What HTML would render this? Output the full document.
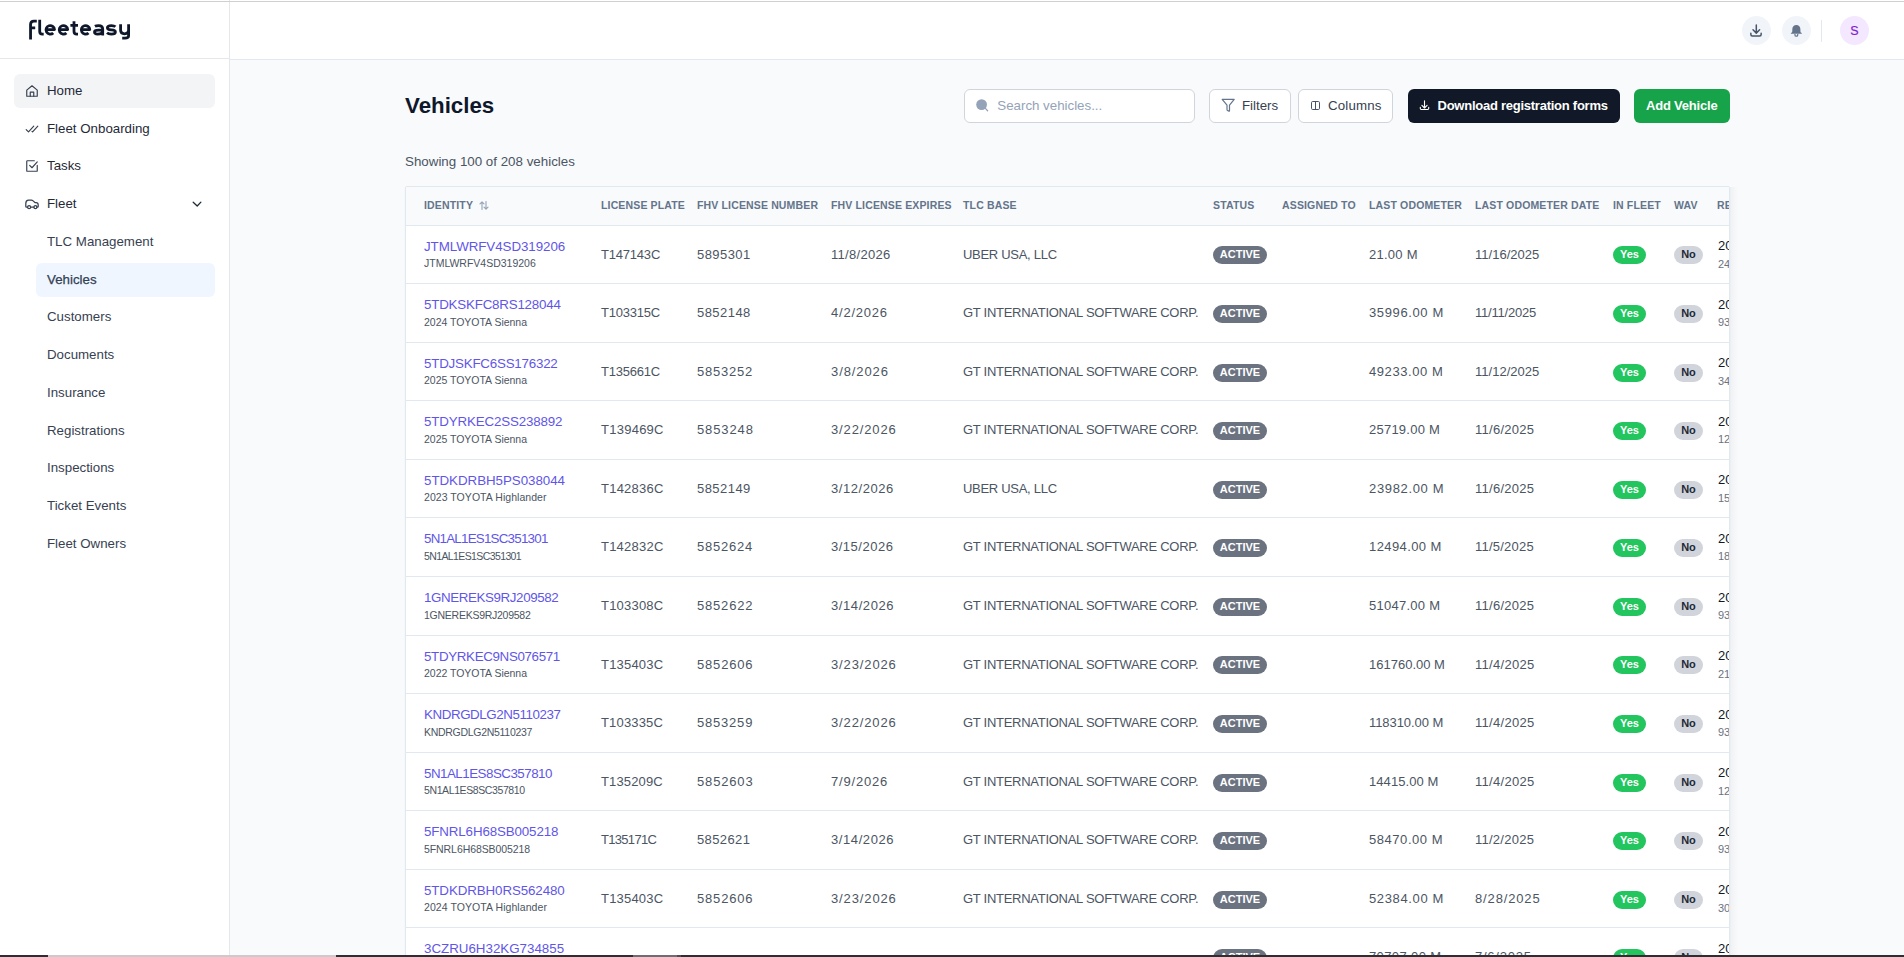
<!DOCTYPE html>
<html><head><meta charset="utf-8">
<style>
*{box-sizing:border-box;margin:0;padding:0}
html,body{width:1904px;height:957px;overflow:hidden}
body{position:relative;background:#f8fafc;font-family:"Liberation Sans",sans-serif;color:#111827}
.abs{position:absolute}
#topline{position:absolute;left:0;top:1px;width:1904px;height:1px;background:#cfd1d1;z-index:10}
#side{position:absolute;left:0;top:0;width:230px;height:957px;background:#fff;border-right:1px solid #e5e7eb}
#logo{position:absolute;left:28px;top:14px;font-size:23px;font-weight:700;color:#0f172a;letter-spacing:0.2px}
#sidehead{position:absolute;left:0;top:58px;width:229px;height:1px;background:#e5e7eb}
.nav{position:absolute;left:14px;width:201px;height:34px;border-radius:6px;font-size:13.3px;font-weight:500;color:#1f2937}
.nav .t{position:absolute;left:33px;top:9px;white-space:nowrap}
.nav svg{position:absolute;left:11px;top:10px}
.nav.hl{background:#f3f4f6}
.sub{position:absolute}
.sn{position:absolute;left:36px;width:179px;height:34px;border-radius:6px;font-size:13.3px;color:#374151}
.sn .t{position:absolute;left:11px;top:9px;white-space:nowrap}
.sn.hl{background:#eff6ff;color:#334155;height:34px;-webkit-text-stroke:0.25px #334155}
.sn.hl .t{top:9px}
#header{position:absolute;left:230px;top:0;width:1674px;height:60px;background:#fff;border-bottom:1px solid #e2e8f0}
.hbtn{position:absolute;top:16px;width:29px;height:29px;border-radius:50%;background:#f1f5f9}
#title{position:absolute;left:405px;top:92.5px;font-size:22.3px;font-weight:700;color:#0f172a;white-space:nowrap}
#showing{position:absolute;left:405px;top:154px;font-size:13.35px;color:#4b5563;white-space:nowrap}
#search{position:absolute;left:964px;top:89px;width:231px;height:34px;background:#fff;border:1px solid #d1d5db;border-radius:6px}
#search .ph{position:absolute;left:32.3px;top:8px;font-size:13.3px;color:#94a3b8;white-space:nowrap}
.obtn{position:absolute;top:89px;height:34px;background:#fff;border:1px solid #d1d5db;border-radius:6px;font-size:13.3px;font-weight:500;color:#374151}
.obtn .t{position:absolute;top:8px;white-space:nowrap}
#dl{position:absolute;left:1408px;top:89px;width:212px;height:34px;background:#111827;border-radius:6px;color:#fff;font-size:13px;font-weight:700;letter-spacing:-0.3px}
#add{position:absolute;left:1634px;top:89px;width:96px;height:34px;background:#16a34a;border-radius:6px;color:#fff;font-size:13px;font-weight:700;letter-spacing:-0.2px}
#table{position:absolute;left:405px;top:186px;width:1325px;height:800px;background:#fff;border:1px solid #e2e8f0;border-radius:2px;overflow:hidden;box-shadow:0 1px 2px rgba(0,0,0,0.05)}
#thead{position:absolute;left:0;top:0;width:100%;height:39px;background:#f8fafc;border-bottom:1px solid #e2e8f0}
.th{position:absolute;top:12px;font-size:10.5px;font-weight:700;color:#64748b;white-space:nowrap;letter-spacing:0.15px}
.sort{font-size:10px;color:#94a3b8}
.row{position:absolute;left:0;width:100%;height:58.5px;border-bottom:1px solid #e2e8f0}
.vin{position:absolute;top:13px;font-size:13.35px;color:#5f56e8;white-space:nowrap}
.sub{position:absolute;top:31px;font-size:10.5px;color:#4b5563;white-space:nowrap}
.td{position:absolute;top:21px;font-size:13px;color:#4b5563;white-space:nowrap}
.badge{position:absolute;top:20px;height:18px;border-radius:9px;font-size:11px;font-weight:700;text-align:center;line-height:17px;white-space:nowrap}
.active{width:54px;background:#6b7280;color:#fff}
.yes{width:33px;background:#22c55e;color:#fff}
.no{width:29px;background:#d1d5db;color:#1f2937;line-height:16px!important}
.reg1{position:absolute;top:12px;font-size:13px;color:#111827;white-space:nowrap}
.reg2{position:absolute;top:31.5px;font-size:11px;color:#6b7280;white-space:nowrap}
#botbar{position:absolute;left:0;top:955px;width:1904px;height:2px;background:#2b2f31;z-index:20}
</style></head><body>
<div id="topline"></div>
<div id="side">
  <svg class="abs" style="left:0;top:0" width="140" height="50" viewBox="0 0 140 50" fill="none" stroke="#0f172a" stroke-width="2.8" stroke-linecap="butt" stroke-linejoin="round">
<path d="M30.55 39.6V24.6Q30.55 21.2 33.9 21.2H36.8M30.55 27.8H35.2"/>
<path d="M39.7 19.8V31.2Q39.7 34.1 42.4 34.1H43.7"/>
<path d="M46 29.6H54.5A4.25 4.25 0 1 0 53.2 32.9"/>
<path d="M59.2 29.6H67.7A4.25 4.25 0 1 0 66.4 32.9"/>
<path d="M74 21.3V31.2Q74 34.1 76.8 34.1H78M70.4 25.45H78"/>
<path d="M81.3 29.6H89.8A4.25 4.25 0 1 0 88.5 32.9"/>
<path d="M94.9 26.3Q96.2 25.6 98.6 25.6Q102.7 25.6 102.7 29.3V35.5M102.7 30.2H98.3Q94.5 30.2 94.5 32.1Q94.5 34.1 97.6 34.1Q102.7 34.1 102.7 30.8"/>
<path d="M115.4 26.8Q114.2 25.6 111.4 25.6Q107.4 25.6 107.4 27.8Q107.4 29.6 111.3 29.9Q115.4 30.2 115.4 32Q115.4 34.1 111.3 34.1Q108.4 34.1 107 32.7"/>
<path d="M120.6 24.2V30.3Q120.6 33.8 124.6 33.8Q128.6 33.8 128.6 30.3M128.6 24.2V35.8Q128.6 38.2 125 38.2H122.2"/>
</svg>
  <div id="sidehead"></div>
  <div class="nav hl" style="top:74px">
    <svg width="14" height="14" viewBox="0 0 24 24" fill="none" stroke="#374151" stroke-width="2" stroke-linecap="round" stroke-linejoin="round"><path d="M3 10.5L12 3l9 7.5V21H3z"/><path d="M9 21v-7h6v7"/></svg>
    <span class="t">Home</span></div>
  <div class="nav" style="top:112px">
    <svg width="14" height="14" viewBox="0 0 24 24" fill="none" stroke="#374151" stroke-width="2" stroke-linecap="round" stroke-linejoin="round"><path d="M2 13l4 4L15 7"/><path d="M12 16l1 1 9-10"/></svg>
    <span class="t">Fleet Onboarding</span></div>
  <div class="nav" style="top:149px">
    <svg width="14" height="14" viewBox="0 0 24 24" fill="none" stroke="#374151" stroke-width="2" stroke-linecap="round" stroke-linejoin="round"><path d="M21 11v9a1 1 0 0 1-1 1H4a1 1 0 0 1-1-1V4a1 1 0 0 1 1-1h12"/><path d="M8 11l4 4 9-10"/></svg>
    <span class="t">Tasks</span></div>
  <div class="nav" style="top:187px">
    <svg width="14" height="14" viewBox="0 0 14 14" fill="none" stroke="#374151" stroke-width="1.25" stroke-linecap="round" stroke-linejoin="round"><path d="M2.6 10.2H1.6Q0.8 10.2 0.8 9.4V6.4Q0.8 3.2 3.6 3.2H6.4Q7.3 3.2 8.1 3.9L9.9 5.5H11.2Q13.2 5.5 13.2 7.9V9.4Q13.2 10.2 12.4 10.2H11.9M5.6 10.2H8.9"/><circle cx="4.1" cy="10.2" r="1.5"/><circle cx="10.4" cy="10.2" r="1.5"/></svg>
    <span class="t">Fleet</span>
    <svg style="left:177px;top:12px" width="12" height="12" viewBox="0 0 12 12" fill="none" stroke="#1f2937" stroke-width="1.3" stroke-linecap="round" stroke-linejoin="round"><path d="M2.2 3.3L6.2 7L9.9 3.1"/></svg>
  </div>
  <div class="sn" style="top:225px"><span class="t">TLC Management</span></div>
  <div class="sn hl" style="top:263px"><span class="t">Vehicles</span></div>
  <div class="sn" style="top:300px"><span class="t">Customers</span></div>
  <div class="sn" style="top:338px"><span class="t">Documents</span></div>
  <div class="sn" style="top:376px"><span class="t">Insurance</span></div>
  <div class="sn" style="top:414px"><span class="t">Registrations</span></div>
  <div class="sn" style="top:451px"><span class="t">Inspections</span></div>
  <div class="sn" style="top:489px"><span class="t">Ticket Events</span></div>
  <div class="sn" style="top:527px"><span class="t">Fleet Owners</span></div>
</div>
<div id="header">
  <div class="hbtn" style="left:1512px"><svg class="abs" style="left:0;top:0" width="29" height="29" viewBox="0 0 29 29" fill="none" stroke="#475569" stroke-width="1.5" stroke-linecap="round" stroke-linejoin="round"><path d="M14.3 9.1V17.1M11 13.8L14.3 17.1L17.6 13.8M8.85 17.3V18.6Q8.85 20.05 10.3 20.05H17.7Q19.15 20.05 19.15 18.6V17.3"/></svg></div>
  <div class="hbtn" style="left:1552px"><svg class="abs" style="left:0;top:0" width="29" height="29" viewBox="0 0 29 29"><path d="M14.35 9.1C11.9 9.1 10.3 10.9 10.3 13.3V15.2Q10.3 16.5 8.9 17.1V17.8H19.8V17.1Q18.4 16.5 18.4 15.2V13.3C18.4 10.9 16.8 9.1 14.35 9.1Z" fill="#64748b"/><path d="M12.95 18V18.9Q12.95 20.2 14.35 20.2Q15.75 20.2 15.75 18.9V18" fill="none" stroke="#64748b" stroke-width="1.2"/></svg></div>
  <div class="abs" style="left:1591px;top:20px;width:1px;height:22px;background:#e2e8f0"></div>
  <div class="hbtn" style="left:1610px;background:#f3e8ff"><span class="abs" style="left:10.3px;top:8px;font-size:12.5px;color:#7e22ce;-webkit-text-stroke:0.2px #7e22ce">S</span></div>
</div>
<div id="title">Vehicles</div>
<div id="showing">Showing 100 of 208 vehicles</div>
<div id="search"><svg class="abs" style="left:11px;top:9px" width="14" height="14" viewBox="0 0 14 14"><circle cx="5.6" cy="5.6" r="5.4" fill="#94a3b8"/><path d="M9.4 9.4L11.6 11.8" stroke="#94a3b8" stroke-width="1.3" stroke-linecap="round"/></svg><span class="ph">Search vehicles...</span></div>
<div class="obtn" style="left:1209px;width:82px"><svg class="abs" style="left:11px;top:8px" width="15" height="15" viewBox="0 0 15 15" fill="none" stroke="#64748b" stroke-width="1.2" stroke-linejoin="round"><path d="M1.2 1.4H13.2L8.5 7.2V12.6Q8.5 13.5 7.7 13.1L6.8 12.6Q6 12.2 6 11.4V7.2Z"/></svg><span class="t" style="left:32px">Filters</span></div>
<div class="obtn" style="left:1298px;width:95px"><svg class="abs" style="left:12px;top:11px" width="11" height="11" viewBox="0 0 11 11" fill="none" stroke="#475569" stroke-width="1"><rect x="0.5" y="0.5" width="8" height="8" rx="1.2"/><path d="M4.5 0.5V8.5"/></svg><span class="t" style="left:29px;letter-spacing:0.15px">Columns</span></div>
<div id="dl"><svg class="abs" style="left:11px;top:11px" width="12" height="12" viewBox="0 0 12 12" fill="none" stroke="#fff" stroke-width="1.1" stroke-linecap="round" stroke-linejoin="round"><path d="M5.5 0.9V7.9M2.9 5.4L5.5 8L8.1 5.4M1.3 7.2V8.6Q1.3 9.5 2.2 9.5H8.8Q9.7 9.5 9.7 8.6V7.2"/></svg><span class="abs" style="left:29.5px;top:9px;white-space:nowrap;letter-spacing:-0.25px">Download registration forms</span></div>
<div id="add"><span class="abs" style="left:12px;top:9px;white-space:nowrap">Add Vehicle</span></div>
<div id="table">
  <div id="thead"><div class="th" style="left:18px">IDENTITY</div><div class="th" style="left:195px">LICENSE PLATE</div><div class="th" style="left:291px">FHV LICENSE NUMBER</div><div class="th" style="left:425px">FHV LICENSE EXPIRES</div><div class="th" style="left:557px">TLC BASE</div><div class="th" style="left:807px">STATUS</div><div class="th" style="left:876px">ASSIGNED TO</div><div class="th" style="left:963px">LAST ODOMETER</div><div class="th" style="left:1069px">LAST ODOMETER DATE</div><div class="th" style="left:1207px">IN FLEET</div><div class="th" style="left:1268px">WAV</div><div class="th" style="left:1311px">REGISTRATION</div><svg class="abs" style="left:73px;top:14px" width="10" height="9" viewBox="0 0 10 9" fill="none" stroke="#94a3b8" stroke-width="1.1" stroke-linecap="round" stroke-linejoin="round"><path d="M3 8.5V0.8M1 2.8L3 0.8L5 2.8M7 0.5V8.2M5 6.2L7 8.2L9 6.2"/></svg></div>
  <div class="row" style="top:39px;height:58px"><div class="vin" style="left:18px;letter-spacing:-0.059px">JTMLWRFV4SD319206</div><div class="sub" style="left:18px;top:31px;letter-spacing:-0.004px">JTMLWRFV4SD319206</div><div class="td" style="left:195px;letter-spacing:-0.204px">T147143C</div><div class="td" style="left:291px;letter-spacing:0.43px">5895301</div><div class="td" style="left:425px;letter-spacing:0.295px">11/8/2026</div><div class="td" style="left:557px;letter-spacing:-0.292px">UBER USA, LLC</div><div class="td" style="left:963px;letter-spacing:0.258px">21.00 M</div><div class="td" style="left:1069px;letter-spacing:0.023px">11/16/2025</div><div class="badge active" style="left:807px;top:20px">ACTIVE</div><div class="badge yes" style="left:1207px;top:20px">Yes</div><div class="badge no" style="left:1268px;top:20px">No</div><div class="reg1" style="left:1312px;top:12px">2025</div><div class="reg2" style="left:1312px">2400</div></div>
<div class="row" style="top:97px;height:59px"><div class="vin" style="left:18px;letter-spacing:-0.205px">5TDKSKFC8RS128044</div><div class="sub" style="left:18px;top:32px;letter-spacing:-0.019px">2024 TOYOTA Sienna</div><div class="td" style="left:195px;letter-spacing:-0.213px">T103315C</div><div class="td" style="left:291px;letter-spacing:0.453px">5852148</div><div class="td" style="left:425px;letter-spacing:0.774px">4/2/2026</div><div class="td" style="left:557px;letter-spacing:-0.277px">GT INTERNATIONAL SOFTWARE CORP.</div><div class="td" style="left:963px;letter-spacing:0.623px">35996.00 M</div><div class="td" style="left:1069px;letter-spacing:-0.206px">11/11/2025</div><div class="badge active" style="left:807px;top:21px">ACTIVE</div><div class="badge yes" style="left:1207px;top:21px">Yes</div><div class="badge no" style="left:1268px;top:21px">No</div><div class="reg1" style="left:1312px;top:13px">2025</div><div class="reg2" style="left:1312px">9300</div></div>
<div class="row" style="top:156px;height:58px"><div class="vin" style="left:18px;letter-spacing:-0.214px">5TDJSKFC6SS176322</div><div class="sub" style="left:18px;top:31px;letter-spacing:-0.019px">2025 TOYOTA Sienna</div><div class="td" style="left:195px;letter-spacing:-0.224px">T135661C</div><div class="td" style="left:291px;letter-spacing:0.771px">5853252</div><div class="td" style="left:425px;letter-spacing:0.912px">3/8/2026</div><div class="td" style="left:557px;letter-spacing:-0.277px">GT INTERNATIONAL SOFTWARE CORP.</div><div class="td" style="left:963px;letter-spacing:0.572px">49233.00 M</div><div class="td" style="left:1069px;letter-spacing:0.017px">11/12/2025</div><div class="badge active" style="left:807px;top:21px">ACTIVE</div><div class="badge yes" style="left:1207px;top:21px">Yes</div><div class="badge no" style="left:1268px;top:21px">No</div><div class="reg1" style="left:1312px;top:12px">2025</div><div class="reg2" style="left:1312px">3400</div></div>
<div class="row" style="top:214px;height:59px"><div class="vin" style="left:18px;letter-spacing:-0.152px">5TDYRKEC2SS238892</div><div class="sub" style="left:18px;top:32px;letter-spacing:-0.019px">2025 TOYOTA Sienna</div><div class="td" style="left:195px;letter-spacing:0.253px">T139469C</div><div class="td" style="left:291px;letter-spacing:0.893px">5853248</div><div class="td" style="left:425px;letter-spacing:0.86px">3/22/2026</div><div class="td" style="left:557px;letter-spacing:-0.277px">GT INTERNATIONAL SOFTWARE CORP.</div><div class="td" style="left:963px;letter-spacing:0.235px">25719.00 M</div><div class="td" style="left:1069px;letter-spacing:0.261px">11/6/2025</div><div class="badge active" style="left:807px;top:21px">ACTIVE</div><div class="badge yes" style="left:1207px;top:21px">Yes</div><div class="badge no" style="left:1268px;top:21px">No</div><div class="reg1" style="left:1312px;top:13px">2025</div><div class="reg2" style="left:1312px">1200</div></div>
<div class="row" style="top:273px;height:58px"><div class="vin" style="left:18px;letter-spacing:-0.042px">5TDKDRBH5PS038044</div><div class="sub" style="left:18px;top:31px;letter-spacing:0.052px">2023 TOYOTA Highlander</div><div class="td" style="left:195px;letter-spacing:0.233px">T142836C</div><div class="td" style="left:291px;letter-spacing:0.452px">5852149</div><div class="td" style="left:425px;letter-spacing:0.545px">3/12/2026</div><div class="td" style="left:557px;letter-spacing:-0.292px">UBER USA, LLC</div><div class="td" style="left:963px;letter-spacing:0.65px">23982.00 M</div><div class="td" style="left:1069px;letter-spacing:0.261px">11/6/2025</div><div class="badge active" style="left:807px;top:21px">ACTIVE</div><div class="badge yes" style="left:1207px;top:21px">Yes</div><div class="badge no" style="left:1268px;top:21px">No</div><div class="reg1" style="left:1312px;top:12px">2025</div><div class="reg2" style="left:1312px">1500</div></div>
<div class="row" style="top:331px;height:59px"><div class="vin" style="left:18px;letter-spacing:-0.763px">5N1AL1ES1SC351301</div><div class="sub" style="left:18px;top:32px;letter-spacing:-0.608px">5N1AL1ES1SC351301</div><div class="td" style="left:195px;letter-spacing:0.227px">T142832C</div><div class="td" style="left:291px;letter-spacing:0.772px">5852624</div><div class="td" style="left:425px;letter-spacing:0.51px">3/15/2026</div><div class="td" style="left:557px;letter-spacing:-0.277px">GT INTERNATIONAL SOFTWARE CORP.</div><div class="td" style="left:963px;letter-spacing:0.409px">12494.00 M</div><div class="td" style="left:1069px;letter-spacing:0.218px">11/5/2025</div><div class="badge active" style="left:807px;top:21px">ACTIVE</div><div class="badge yes" style="left:1207px;top:21px">Yes</div><div class="badge no" style="left:1268px;top:21px">No</div><div class="reg1" style="left:1312px;top:13px">2025</div><div class="reg2" style="left:1312px">1800</div></div>
<div class="row" style="top:390px;height:59px"><div class="vin" style="left:18px;letter-spacing:-0.39px">1GNEREKS9RJ209582</div><div class="sub" style="left:18px;top:32px;letter-spacing:-0.257px">1GNEREKS9RJ209582</div><div class="td" style="left:195px;letter-spacing:0.213px">T103308C</div><div class="td" style="left:291px;letter-spacing:0.805px">5852622</div><div class="td" style="left:425px;letter-spacing:0.584px">3/14/2026</div><div class="td" style="left:557px;letter-spacing:-0.277px">GT INTERNATIONAL SOFTWARE CORP.</div><div class="td" style="left:963px;letter-spacing:0.257px">51047.00 M</div><div class="td" style="left:1069px;letter-spacing:0.261px">11/6/2025</div><div class="badge active" style="left:807px;top:21px">ACTIVE</div><div class="badge yes" style="left:1207px;top:21px">Yes</div><div class="badge no" style="left:1268px;top:21px">No</div><div class="reg1" style="left:1312px;top:13px">2025</div><div class="reg2" style="left:1312px">9300</div></div>
<div class="row" style="top:449px;height:58px"><div class="vin" style="left:18px;letter-spacing:-0.336px">5TDYRKEC9NS076571</div><div class="sub" style="left:18px;top:31px;letter-spacing:-0.019px">2022 TOYOTA Sienna</div><div class="td" style="left:195px;letter-spacing:0.189px">T135403C</div><div class="td" style="left:291px;letter-spacing:0.818px">5852606</div><div class="td" style="left:425px;letter-spacing:0.875px">3/23/2026</div><div class="td" style="left:557px;letter-spacing:-0.277px">GT INTERNATIONAL SOFTWARE CORP.</div><div class="td" style="left:963px;letter-spacing:0.0px">161760.00 M</div><div class="td" style="left:1069px;letter-spacing:0.292px">11/4/2025</div><div class="badge active" style="left:807px;top:20px">ACTIVE</div><div class="badge yes" style="left:1207px;top:20px">Yes</div><div class="badge no" style="left:1268px;top:20px">No</div><div class="reg1" style="left:1312px;top:12px">2025</div><div class="reg2" style="left:1312px">2100</div></div>
<div class="row" style="top:507px;height:59px"><div class="vin" style="left:18px;letter-spacing:-0.421px">KNDRGDLG2N5110237</div><div class="sub" style="left:18px;top:32px;letter-spacing:-0.289px">KNDRGDLG2N5110237</div><div class="td" style="left:195px;letter-spacing:0.165px">T103335C</div><div class="td" style="left:291px;letter-spacing:0.794px">5853259</div><div class="td" style="left:425px;letter-spacing:0.86px">3/22/2026</div><div class="td" style="left:557px;letter-spacing:-0.277px">GT INTERNATIONAL SOFTWARE CORP.</div><div class="td" style="left:963px;letter-spacing:-0.066px">118310.00 M</div><div class="td" style="left:1069px;letter-spacing:0.292px">11/4/2025</div><div class="badge active" style="left:807px;top:21px">ACTIVE</div><div class="badge yes" style="left:1207px;top:21px">Yes</div><div class="badge no" style="left:1268px;top:21px">No</div><div class="reg1" style="left:1312px;top:13px">2025</div><div class="reg2" style="left:1312px">9300</div></div>
<div class="row" style="top:566px;height:58px"><div class="vin" style="left:18px;letter-spacing:-0.507px">5N1AL1ES8SC357810</div><div class="sub" style="left:18px;top:31px;letter-spacing:-0.395px">5N1AL1ES8SC357810</div><div class="td" style="left:195px;letter-spacing:0.147px">T135209C</div><div class="td" style="left:291px;letter-spacing:0.833px">5852603</div><div class="td" style="left:425px;letter-spacing:0.798px">7/9/2026</div><div class="td" style="left:557px;letter-spacing:-0.277px">GT INTERNATIONAL SOFTWARE CORP.</div><div class="td" style="left:963px;letter-spacing:0.082px">14415.00 M</div><div class="td" style="left:1069px;letter-spacing:0.292px">11/4/2025</div><div class="badge active" style="left:807px;top:21px">ACTIVE</div><div class="badge yes" style="left:1207px;top:21px">Yes</div><div class="badge no" style="left:1268px;top:21px">No</div><div class="reg1" style="left:1312px;top:12px">2025</div><div class="reg2" style="left:1312px">1200</div></div>
<div class="row" style="top:624px;height:59px"><div class="vin" style="left:18px;letter-spacing:-0.131px">5FNRL6H68SB005218</div><div class="sub" style="left:18px;top:32px;letter-spacing:-0.075px">5FNRL6H68SB005218</div><div class="td" style="left:195px;letter-spacing:-0.691px">T135171C</div><div class="td" style="left:291px;letter-spacing:0.386px">5852621</div><div class="td" style="left:425px;letter-spacing:0.584px">3/14/2026</div><div class="td" style="left:557px;letter-spacing:-0.277px">GT INTERNATIONAL SOFTWARE CORP.</div><div class="td" style="left:963px;letter-spacing:0.551px">58470.00 M</div><div class="td" style="left:1069px;letter-spacing:0.255px">11/2/2025</div><div class="badge active" style="left:807px;top:21px">ACTIVE</div><div class="badge yes" style="left:1207px;top:21px">Yes</div><div class="badge no" style="left:1268px;top:21px">No</div><div class="reg1" style="left:1312px;top:13px">2025</div><div class="reg2" style="left:1312px">9300</div></div>
<div class="row" style="top:683px;height:58px"><div class="vin" style="left:18px;letter-spacing:-0.107px">5TDKDRBH0RS562480</div><div class="sub" style="left:18px;top:31px;letter-spacing:0.071px">2024 TOYOTA Highlander</div><div class="td" style="left:195px;letter-spacing:0.189px">T135403C</div><div class="td" style="left:291px;letter-spacing:0.818px">5852606</div><div class="td" style="left:425px;letter-spacing:0.875px">3/23/2026</div><div class="td" style="left:557px;letter-spacing:-0.277px">GT INTERNATIONAL SOFTWARE CORP.</div><div class="td" style="left:963px;letter-spacing:0.636px">52384.00 M</div><div class="td" style="left:1069px;letter-spacing:0.855px">8/28/2025</div><div class="badge active" style="left:807px;top:21px">ACTIVE</div><div class="badge yes" style="left:1207px;top:21px">Yes</div><div class="badge no" style="left:1268px;top:21px">No</div><div class="reg1" style="left:1312px;top:12px">2025</div><div class="reg2" style="left:1312px">3000</div></div>
<div class="row" style="top:741px;height:59px"><div class="vin" style="left:18px;letter-spacing:-0.006px">3CZRU6H32KG734855</div><div class="sub" style="left:18px;top:32px;letter-spacing:0px">3CZRU6H32KG734855</div><div class="td" style="left:963px;letter-spacing:0.389px">70707.00 M</div><div class="td" style="left:1069px;letter-spacing:0.758px">7/6/2025</div><div class="badge active" style="left:807px;top:21px">ACTIVE</div><div class="badge yes" style="left:1207px;top:21px">Yes</div><div class="badge no" style="left:1268px;top:21px">No</div><div class="reg1" style="left:1312px;top:13px">2025</div><div class="reg2" style="left:1312px">9300</div></div>
</div>
<div class="abs" style="left:1730px;top:187px;width:8px;height:770px;background:linear-gradient(to right,rgba(15,23,42,0.04),rgba(15,23,42,0))"></div>
<div id="botbar"><div class="abs" style="left:48px;top:0;width:288px;height:2px;background:#c9cbcd"></div><div class="abs" style="left:633px;top:0;width:44px;height:2px;background:#6b6f72"></div><div class="abs" style="left:677px;top:0;width:4px;height:2px;background:#4a4e51"></div></div>
</body></html>
